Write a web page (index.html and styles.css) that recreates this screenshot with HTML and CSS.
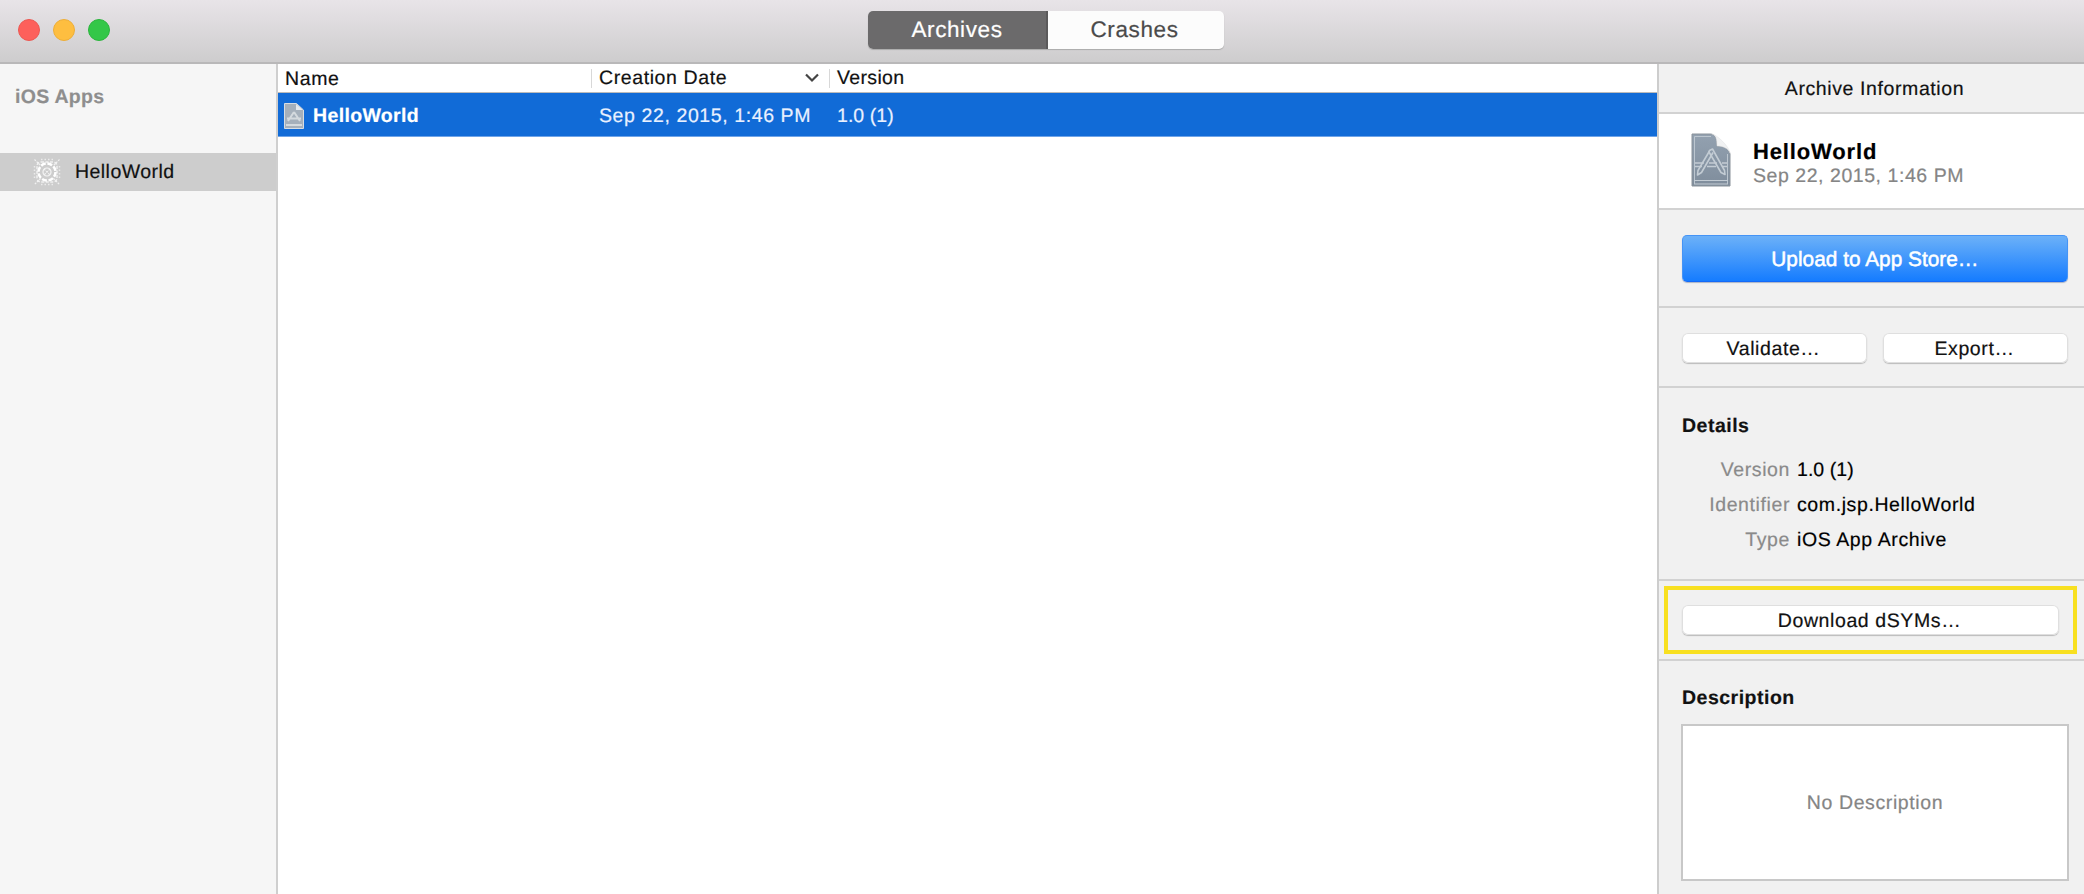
FILE: index.html
```html
<!DOCTYPE html>
<html lang="en">
<head>
<meta charset="utf-8">
<title>Archives</title>
<link rel="stylesheet" href="styles.css">
</head>
<body>
<svg class="defs" width="0" height="0" aria-hidden="true">
  <defs>
    <linearGradient id="page" x1="0" y1="0" x2="0" y2="1">
      <stop offset="0" stop-color="#93a1b0"/>
      <stop offset="1" stop-color="#7f8d9c"/>
    </linearGradient>
    <symbol id="archive" viewBox="0 0 40 54">
      <path d="M1 1h18c5 0 7 4 7 12 7 0 12 3 13 8v32H1z" fill="url(#page)" stroke="#8a929a" stroke-width="1"/>
      <path d="M3.500 51V3.500H20M36.500 21v30" fill="none" stroke="#bcc6cf" stroke-width="1"/>
      <path d="M3 47.500h34M3 51h34" stroke="#c3ccd4" stroke-width="1.200"/>
      <path d="M21 1c5 1 17 12 18 19-2-5-7-7-13-7 0-7-1-11-5-12z" fill="#f1f2f3" stroke="#dcdfe1" stroke-width=".5"/>
      <g fill="none" stroke="#c3ccd4" stroke-width="1.600" stroke-linejoin="round">
        <path d="M18.500 17.500l3-1.500 12 21.500.5 4-4-2L18 19z"/>
        <path d="M18.500 18L7 37.500 6.500 42l4-2.500L22 19.500"/>
        <path d="M4 30h9M18 30h8M31 30h5M4 33.500h7M16 33.500h9M32 33.500h4"/>
      </g>
    </symbol>
  </defs>
</svg>
<div class="window">
  <header class="titlebar">
    <div class="lights"><i class="light close"></i><i class="light minimize"></i><i class="light expand"></i></div>
    <div class="tabs"><div class="tab active">Archives</div><div class="tab">Crashes</div></div>
  </header>
  <div class="content">
    <aside class="sidebar">
      <div class="group">iOS Apps</div>
      <div class="app">
        <svg class="app-icon" viewBox="0 0 28 28" fill="none" stroke="#fff">
          <rect x="4" y="4" width="20" height="20" rx="4" stroke-width="1.500" stroke-dasharray="3 1.500" opacity=".7"/>
          <circle cx="14" cy="14" r="8.500" stroke-width="2.500" stroke-dasharray="5 1.700"/>
          <circle cx="14" cy="14" r="4" stroke-width="1.200" opacity=".8"/>
          <path d="M1.500 1.500l6 6M20.500 20.500l6 6M26.500 1.500l-6 6M7.500 20.500l-6 6M11 11l6 6M17 11l-6 6" stroke-width="1.200" stroke-dasharray="2 1" opacity=".7"/>
          <path d="M8 1.500h12M8 26.500h12M1.500 8v12M26.500 8v12" stroke-width="1.500" stroke-dasharray="1.500 2" opacity=".6"/>
        </svg>
        <span>HelloWorld</span>
      </div>
    </aside>
    <main class="list">
      <div class="columns">
        <div class="head-name">Name</div>
        <div class="head-date"><span>Creation Date</span>
          <svg class="chevron" viewBox="0 0 14 10" fill="none" stroke="#444" stroke-width="2.200"><path d="M1 1.500l6 6 6-6"/></svg>
        </div>
        <div class="head-version">Version</div>
      </div>
      <div class="row">
        <div class="cell-name"><svg class="row-icon" viewBox="0 0 20 26">
          <path d="M.5.5h12l7 6.500v18.500H.5z" fill="#a5b0bb" stroke="#d7dde2"/>
          <path d="M12 1v6h7z" fill="#e6eaed"/>
          <path d="M10 9l-6 9M10 9l6 9M3 15.500h14M2 22h16" fill="none" stroke="#d4dade" stroke-width="2"/>
        </svg><b>HelloWorld</b></div>
        <div class="cell-date">Sep 22, 2015, 1:46 PM</div>
        <div class="cell-version">1.0 (1)</div>
      </div>
    </main>
    <aside class="inspector">
      <div class="section heading">Archive Information</div>
      <div class="section summary">
        <svg class="archive-icon"><use href="#archive"/></svg>
        <div><div class="name">HelloWorld</div><div class="date">Sep 22, 2015, 1:46 PM</div></div>
      </div>
      <div class="section upload"><div class="primary">Upload to App Store…</div></div>
      <div class="section actions"><div class="button">Validate…</div><div class="button">Export…</div></div>
      <div class="section details">
        <div class="title">Details</div>
        <div class="facts">
          <span class="label">Version</span><span class="number">1.0 (1)</span>
          <span class="label">Identifier</span><span>com.jsp.HelloWorld</span>
          <span class="label">Type</span><span>iOS App Archive</span>
        </div>
      </div>
      <div class="section symbols"><div class="highlight"><div class="button">Download dSYMs…</div></div></div>
      <div class="description">
        <div class="title">Description</div>
        <div class="box">No Description</div>
      </div>
    </aside>
  </div>
</div>
</body>
</html>
```

FILE: styles.css
```css
* { box-sizing: border-box; }
body {
  margin: 0;
  font: 19.5px/24px "Liberation Sans", Arial, sans-serif;
  letter-spacing: .6px;
  color: #111;
  white-space: nowrap;
  text-rendering: geometricPrecision;
  -webkit-text-stroke: .2px;
}
.defs { position: absolute; }
.window { width: 2084px; height: 894px; display: flex; flex-direction: column; overflow: hidden; background: #fff; }

.titlebar {
  height: 64px;
  flex: none;
  display: grid;
  grid-template-columns: 868px 356px;
  align-items: start;
  background: linear-gradient(#e8e4e8, #cecdce 61px);
  border-bottom: 2px solid #b9b8b9;
}
.lights { display: flex; gap: 13px; padding: 19px 0 0 18px; }
.light { width: 22px; height: 22px; border-radius: 50%; border: 1px solid; }
.close { background: #fd605b; border-color: #ec5852; }
.minimize { background: #febe40; border-color: #edae38; }
.expand { background: #33c748; border-color: #2bb53d; }
.tabs {
  display: flex;
  height: 38px;
  margin-top: 11px;
  border-radius: 5px;
  overflow: hidden;
  background: #fcfcfc;
  box-shadow: 0 1px 1px #aaa;
  font-size: 22.5px;
  line-height: 37px;
  text-align: center;
  color: #4a4a4a;
}
.tab { flex: 1; padding-right: 3px; }
.tab.active { flex: none; width: 180px; padding: 0; background: #6b6a6b; color: #fff; border-right: 2px solid #5b5a5b; }

.content { flex: 1; display: grid; grid-template-columns: 278px 1379px 427px; min-height: 0; }

.sidebar { background: #f6f6f6; border-right: 2px solid #cfcfcf; }
.group { padding: 21px 0 0 15px; height: 89px; font-weight: bold; letter-spacing: .3px; color: #8e8e8e; }
.app { display: flex; align-items: center; gap: 14px; height: 38px; padding-left: 33px; background: #cdcdcd; letter-spacing: .45px; }
.app-icon { width: 28px; height: 28px; }

.columns, .row { display: grid; grid-template-columns: 313px 238px 1fr; }
.columns { height: 29px; align-items: center; border-bottom: 1px solid #bbb; }
.head-name { padding: 1px 0 0 7px; }
.head-date, .head-version { height: 19px; line-height: 18px; border-left: 1px solid #d8d8d8; padding-left: 7px; }
.head-version { letter-spacing: .35px; }
.head-date { display: flex; justify-content: space-between; align-items: center; padding-right: 10px; }
.head-date span { line-height: 18px; padding-bottom: 1px; }
.chevron { width: 14px; height: 10px; }
.row { height: 44px; align-items: center; background: #116bd7; color: #e9f1ff; border-bottom: 1px solid #6fa4e8; }
.cell-name { display: flex; align-items: center; gap: 9px; padding: 2px 0 0 6px; color: #fff; letter-spacing: .35px; }
.row-icon { width: 20px; height: 26px; }
.cell-date, .cell-version { padding: 2px 0 0 8px; }
.cell-version, .number { letter-spacing: .05px; }

.inspector { background: #f1f1f1; border-left: 2px solid #cdcdcd; }
.section { border-bottom: 2px solid #d2d2d2; }
.heading { height: 50px; padding: 13px 0 0 6px; text-align: center; }
.summary { height: 96px; display: flex; gap: 22px; padding: 19px 0 0 32px; background: #fff; }
.archive-icon { width: 40px; height: 54px; }
.name { margin-top: 7px; font-size: 22px; font-weight: bold; letter-spacing: .85px; color: #000; }
.date { margin-top: 1px; line-height: 22px; letter-spacing: .55px; color: #858585; }
.upload { height: 98px; padding: 25px 16px 0 23px; }
.primary {
  height: 47px;
  border-radius: 5px;
  background: linear-gradient(#6cb1f8, #157cff);
  border: 1px solid #4594f6;
  border-bottom-color: #146af8;
  box-shadow: 0 1px 1px #aab4c6;
  color: #fff;
  text-align: center;
  font-size: 20.8px;
  line-height: 47px;
  letter-spacing: .02px;
  -webkit-text-stroke: .5px #fff;
}
.actions { height: 80px; display: flex; gap: 16px; padding: 25px 16px 0 23px; }
.button {
  flex: 1;
  height: 30px;
  line-height: 32px;
  padding-right: 2px;
  border-radius: 6px;
  background: #fff;
  box-shadow: inset 0 0 0 1px #dfdfdf, 0 1px 1px #bbb;
  text-align: center;
}
.details { height: 193px; padding: 26px 0 0 23px; }
.title { font-weight: bold; letter-spacing: .5px; }
.facts { display: grid; grid-template-columns: 108px auto; grid-auto-rows: 35px; column-gap: 7px; margin-top: 15px; line-height: 35px; color: #000; }
.label { text-align: right; color: #8a8a8a; }
.symbols { height: 80px; padding: 5px 7px 0 5px; }
.highlight { height: 68px; padding: 15px 14px 0; border: 4px solid #f8e020; }
.description { padding: 25px 15px 0 22px; }
.description .title { padding-left: 1px; }
.box { height: 157px; margin-top: 14px; border: 2px solid #c8c8c8; background: #fff; text-align: center; line-height: 155px; color: #858585; }
```
